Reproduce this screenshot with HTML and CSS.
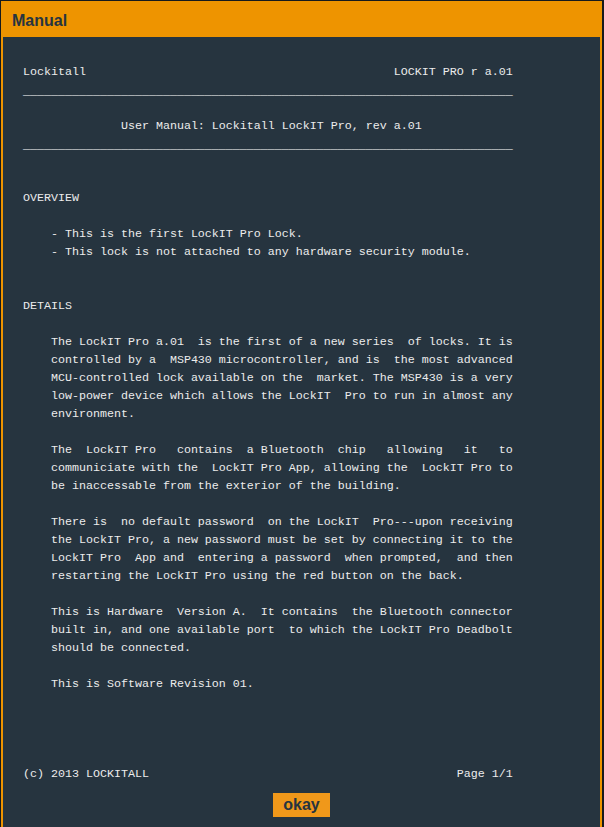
FILE: index.html
```html
<!DOCTYPE html>
<html>
<head>
<meta charset="utf-8">
<title>Manual</title>
<link rel="stylesheet" href="styles.css">
</head>
<body>
<div class="modal">
  <div class="modal-header">Manual</div>
  <div class="modal-body">
<pre class="manual">Lockitall                                            LOCKIT PRO r a.01
<span class="rule">______________________________________________________________________</span>

              User Manual: Lockitall LockIT Pro, rev a.01
<span class="rule">______________________________________________________________________</span>


OVERVIEW

    - This is the first LockIT Pro Lock.
    - This lock is not attached to any hardware security module.


DETAILS

    The LockIT Pro a.01  is the first of a new series  of locks. It is
    controlled by a  MSP430 microcontroller, and is  the most advanced
    MCU-controlled lock available on the  market. The MSP430 is a very
    low-power device which allows the LockIT  Pro to run in almost any
    environment.

    The  LockIT Pro   contains  a Bluetooth  chip   allowing   it   to
    communiciate with the  LockIT Pro App, allowing the  LockIT Pro to
    be inaccessable from the exterior of the building.

    There is  no default password  on the LockIT  Pro---upon receiving
    the LockIT Pro, a new password must be set by connecting it to the
    LockIT Pro  App and  entering a password  when prompted,  and then
    restarting the LockIT Pro using the red button on the back.

    This is Hardware  Version A.  It contains  the Bluetooth connector
    built in, and one available port  to which the LockIT Pro Deadbolt
    should be connected.

    This is Software Revision 01.




(c) 2013 LOCKITALL                                            Page 1/1</pre>
    <div class="actions">
      <button class="okay">okay</button>
    </div>
  </div>
</div>
</body>
</html>
```

FILE: styles.css
```css
html, body {
  margin: 0;
  padding: 0;
  background: #161a1d;
}

body {
  padding: 1px 0 0 1px;
}

.modal {
  width: 601px;
  box-sizing: border-box;
  border-left: 2px solid #ee9400;
  border-right: 2px solid #ee9400;
  background: #26343f;
}

.modal-header {
  height: 36px;
  margin: 0 -2px;
  padding-left: 11px;
  background: #ee9400;
  color: #263440;
  font-family: "Liberation Sans", Arial, sans-serif;
  font-weight: bold;
  font-size: 16px;
  line-height: 40px;
}

.modal-body {
  padding: 26px 20px 20px 20px;
}

.manual {
  margin: 0;
  font-family: "Liberation Mono", "Courier New", monospace;
  font-size: 11.665px;
  line-height: 18px;
  color: #ececec;
}

.rule {
  line-height: 0;
  vertical-align: -2px;
  color: #f4f4f4;
}

.actions {
  display: flex;
  justify-content: center;
  padding-top: 10px;
  padding-right: 0;
}

.okay {
  height: 24px;
  padding: 0 10px;
  border: none;
  background: #f0981a;
  color: #263440;
  font-family: "Liberation Sans", Arial, sans-serif;
  font-weight: bold;
  font-size: 16px;
  line-height: 24px;
  cursor: pointer;
}
```
